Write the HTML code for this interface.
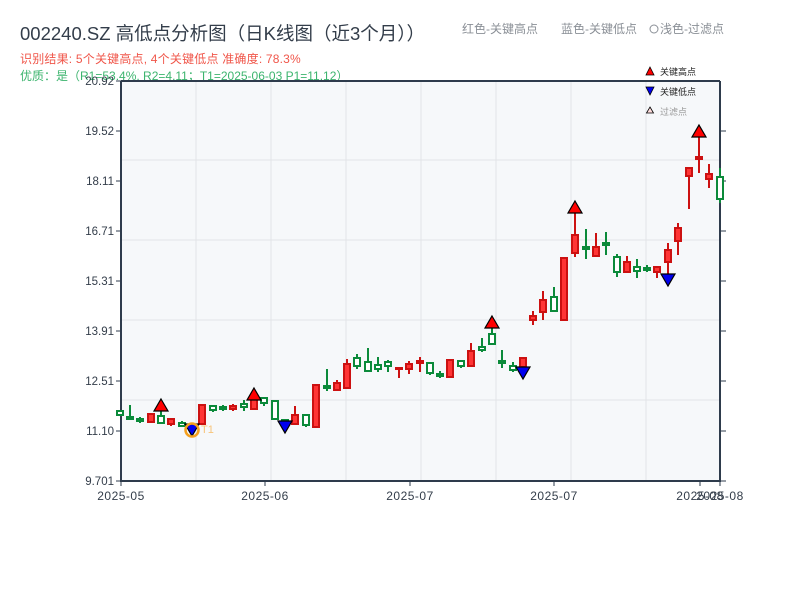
<!DOCTYPE html>
<html><head><meta charset="utf-8"><style>
body{margin:0;background:#fff;width:800px;height:600px;overflow:hidden;font-family:"Liberation Sans","Noto Sans CJK SC",sans-serif}
</style></head><body>
<svg width="800" height="600" xmlns="http://www.w3.org/2000/svg" font-family="Liberation Sans, Noto Sans CJK SC, sans-serif">
<text x="20" y="40" font-size="18.5" fill="#333d4a">002240.SZ 高低点分析图（日K线图（近3个月））</text>
<text x="462" y="33" font-size="12" fill="#8a8f96">红色-关键高点</text>
<text x="561" y="33" font-size="12" fill="#8a8f96">蓝色-关键低点</text>
<circle cx="654" cy="29" r="4" fill="none" stroke="#8a8f96"/>
<text x="660" y="33" font-size="12" fill="#8a8f96">浅色-过滤点</text>
<text x="20" y="63" font-size="12" fill="#f0564a" letter-spacing="0.2">识别结果: 5个关键高点, 4个关键低点  准确度: 78.3%</text>
<text x="20" y="80" font-size="12" fill="#3cb46e">优质：是（R1=53.4%, R2=4.11；T1=2025-06-03 P1=11.12）</text>
<rect x="121" y="81" width="599" height="400" fill="#f6f8fa"/>
<g stroke="#e2e4e8" stroke-width="1">
<line x1="196" y1="81" x2="196" y2="481"/><line x1="271" y1="81" x2="271" y2="481"/><line x1="346" y1="81" x2="346" y2="481"/><line x1="421" y1="81" x2="421" y2="481"/><line x1="496" y1="81" x2="496" y2="481"/><line x1="571" y1="81" x2="571" y2="481"/><line x1="646" y1="81" x2="646" y2="481"/>
<line x1="121" y1="160" x2="720" y2="160"/><line x1="121" y1="240" x2="720" y2="240"/><line x1="121" y1="320" x2="720" y2="320"/><line x1="121" y1="400" x2="720" y2="400"/>
</g>
<g stroke="#2e3b4c" stroke-width="2" fill="none">
<line x1="121" y1="81" x2="121" y2="482"/><line x1="120" y1="481" x2="721" y2="481"/><line x1="720" y1="81" x2="720" y2="482"/><line x1="121" y1="81" x2="720" y2="81"/>
</g>
<g stroke="#2e3b4c" stroke-width="1">
<line x1="116" y1="81" x2="121" y2="81"/><line x1="116" y1="131" x2="121" y2="131"/><line x1="116" y1="181" x2="121" y2="181"/><line x1="116" y1="231" x2="121" y2="231"/><line x1="116" y1="281" x2="121" y2="281"/><line x1="116" y1="331" x2="121" y2="331"/><line x1="116" y1="381" x2="121" y2="381"/><line x1="116" y1="431" x2="121" y2="431"/><line x1="116" y1="481" x2="121" y2="481"/>
<line x1="720" y1="131" x2="726" y2="131"/><line x1="720" y1="181" x2="726" y2="181"/><line x1="720" y1="231" x2="726" y2="231"/><line x1="720" y1="281" x2="726" y2="281"/><line x1="720" y1="331" x2="726" y2="331"/><line x1="720" y1="381" x2="726" y2="381"/><line x1="720" y1="431" x2="726" y2="431"/><line x1="720" y1="481" x2="726" y2="481"/>
<line x1="121" y1="481" x2="121" y2="486"/><line x1="265" y1="481" x2="265" y2="486"/><line x1="410" y1="481" x2="410" y2="486"/><line x1="554" y1="481" x2="554" y2="486"/><line x1="700" y1="481" x2="700" y2="486"/><line x1="720" y1="481" x2="720" y2="486"/>
</g>
<g font-size="11.5" fill="#333d4a" text-anchor="end">
<text x="114" y="85">20.92</text><text x="114" y="135">19.52</text><text x="114" y="185">18.11</text><text x="114" y="235">16.71</text><text x="114" y="285">15.31</text><text x="114" y="335">13.91</text><text x="114" y="385">12.51</text><text x="114" y="435">11.10</text><text x="114" y="485">9.701</text>
</g>
<g font-size="12" fill="#333d4a" text-anchor="middle" letter-spacing="0.5">
<text x="121" y="500">2025-05</text><text x="265" y="500">2025-06</text><text x="410" y="500">2025-07</text><text x="554" y="500">2025-07</text><text x="700" y="500">2025-08</text><text x="720" y="500">2025-08</text>
</g>
<g stroke-width="2">
<g stroke="#0b8a3a" fill="#fff">
<line x1="120" y1="410" x2="120" y2="416"/><rect x="117" y="411" width="6" height="4"/>
<line x1="130" y1="405" x2="130" y2="419"/><rect x="127" y="417" width="6" height="2"/>
<line x1="140" y1="417" x2="140" y2="423"/><rect x="137" y="419" width="6" height="2"/>
<line x1="161" y1="410" x2="161" y2="423"/><rect x="158" y="416" width="6" height="7"/>
<line x1="182" y1="421" x2="182" y2="427"/><rect x="179" y="423" width="6" height="3"/>
<line x1="213" y1="405" x2="213" y2="412"/><rect x="210" y="406" width="6" height="4"/>
<line x1="223" y1="405" x2="223" y2="411"/><rect x="220" y="407" width="6" height="2"/>
<line x1="244" y1="400" x2="244" y2="411"/><rect x="241" y="404" width="6" height="3"/>
<line x1="264" y1="397" x2="264" y2="406"/><rect x="261" y="398" width="6" height="5"/>
<line x1="275" y1="400" x2="275" y2="420"/><rect x="272" y="401" width="6" height="18"/>
<line x1="285" y1="419" x2="285" y2="423"/><rect x="282" y="420" width="6" height="2"/>
<line x1="306" y1="414" x2="306" y2="427"/><rect x="303" y="415" width="6" height="10"/>
<line x1="327" y1="369" x2="327" y2="391"/><rect x="324" y="386" width="6" height="2"/>
<line x1="357" y1="354" x2="357" y2="369"/><rect x="354" y="358" width="6" height="8"/>
<line x1="368" y1="348" x2="368" y2="372"/><rect x="365" y="362" width="6" height="9"/>
<line x1="378" y1="357" x2="378" y2="372"/><rect x="375" y="365" width="6" height="4"/>
<line x1="388" y1="360" x2="388" y2="372"/><rect x="385" y="362" width="6" height="4"/>
<line x1="430" y1="363" x2="430" y2="375"/><rect x="427" y="363" width="6" height="10"/>
<line x1="440" y1="371" x2="440" y2="378"/><rect x="437" y="374" width="6" height="2"/>
<line x1="461" y1="360" x2="461" y2="368"/><rect x="458" y="361" width="6" height="5"/>
<line x1="482" y1="338" x2="482" y2="352"/><rect x="479" y="347" width="6" height="3"/>
<line x1="492" y1="328" x2="492" y2="344"/><rect x="489" y="334" width="6" height="10"/>
<line x1="502" y1="350" x2="502" y2="368"/><rect x="499" y="361" width="6" height="2"/>
<line x1="513" y1="362" x2="513" y2="372"/><rect x="510" y="366" width="6" height="4"/>
<line x1="554" y1="287" x2="554" y2="312"/><rect x="551" y="297" width="6" height="14"/>
<line x1="586" y1="229" x2="586" y2="259"/><rect x="583" y="247" width="6" height="2"/>
<line x1="606" y1="232" x2="606" y2="255"/><rect x="603" y="243" width="6" height="2"/>
<line x1="617" y1="254" x2="617" y2="277"/><rect x="614" y="257" width="6" height="15"/>
<line x1="637" y1="259" x2="637" y2="278"/><rect x="634" y="267" width="6" height="4"/>
<line x1="647" y1="265" x2="647" y2="272"/><rect x="644" y="268" width="6" height="2"/>
<line x1="720" y1="168" x2="720" y2="203"/><rect x="717" y="177" width="6" height="22"/>
</g>
<g stroke="#cc1111" fill="#ff3535">
<line x1="151" y1="413" x2="151" y2="423"/><rect x="148" y="414" width="6" height="8"/>
<line x1="171" y1="419" x2="171" y2="426"/><rect x="168" y="419" width="6" height="5"/>
<line x1="202" y1="404" x2="202" y2="424"/><rect x="199" y="405" width="6" height="19"/>
<line x1="233" y1="404" x2="233" y2="411"/><rect x="230" y="406" width="6" height="3"/>
<line x1="254" y1="398" x2="254" y2="409"/><rect x="251" y="398" width="6" height="11"/>
<line x1="295" y1="406" x2="295" y2="425"/><rect x="292" y="415" width="6" height="9"/>
<line x1="316" y1="385" x2="316" y2="427"/><rect x="313" y="385" width="6" height="42"/>
<line x1="337" y1="380" x2="337" y2="391"/><rect x="334" y="383" width="6" height="7"/>
<line x1="347" y1="359" x2="347" y2="389"/><rect x="344" y="364" width="6" height="24"/>
<line x1="399" y1="368" x2="399" y2="378"/><rect x="396" y="368" width="6" height="1"/>
<line x1="409" y1="361" x2="409" y2="374"/><rect x="406" y="364" width="6" height="5"/>
<line x1="420" y1="357" x2="420" y2="372"/><rect x="417" y="361" width="6" height="2"/>
<line x1="450" y1="360" x2="450" y2="377"/><rect x="447" y="360" width="6" height="17"/>
<line x1="471" y1="343" x2="471" y2="366"/><rect x="468" y="351" width="6" height="15"/>
<line x1="523" y1="357" x2="523" y2="367"/><rect x="520" y="358" width="6" height="9"/>
<line x1="533" y1="311" x2="533" y2="325"/><rect x="530" y="316" width="6" height="4"/>
<line x1="543" y1="291" x2="543" y2="320"/><rect x="540" y="300" width="6" height="12"/>
<line x1="564" y1="258" x2="564" y2="320"/><rect x="561" y="258" width="6" height="62"/>
<line x1="575" y1="213" x2="575" y2="257"/><rect x="572" y="235" width="6" height="18"/>
<line x1="596" y1="233" x2="596" y2="257"/><rect x="593" y="247" width="6" height="9"/>
<line x1="627" y1="256" x2="627" y2="273"/><rect x="624" y="262" width="6" height="10"/>
<line x1="657" y1="267" x2="657" y2="278"/><rect x="654" y="267" width="6" height="5"/>
<line x1="668" y1="243" x2="668" y2="274"/><rect x="665" y="250" width="6" height="12"/>
<line x1="678" y1="223" x2="678" y2="255"/><rect x="675" y="228" width="6" height="13"/>
<line x1="689" y1="168" x2="689" y2="209"/><rect x="686" y="168" width="6" height="8"/>
<line x1="699" y1="137" x2="699" y2="173"/><rect x="696" y="157" width="6" height="2"/>
<line x1="709" y1="164" x2="709" y2="188"/><rect x="706" y="174" width="6" height="5"/>
</g>
</g>
<g stroke="#000" stroke-width="1.2">
<g fill="#ff0000">
<path d="M161 399 L168 411 L154 411Z"/><path d="M254 388 L261 400 L247 400Z"/><path d="M492 316 L499 328 L485 328Z"/><path d="M575 201 L582 213 L568 213Z"/><path d="M699 125 L706 137 L692 137Z"/>
</g>
<g fill="#0000ee">
<path d="M185 424 L199 424 L192 436Z"/><path d="M278 421 L292 421 L285 433Z"/><path d="M516 367 L530 367 L523 379Z"/><path d="M661 274 L675 274 L668 286Z"/>
</g>
</g>
<circle cx="192" cy="430" r="6.5" fill="none" stroke="#f5a01e" stroke-width="2.5"/>
<text x="201" y="433" font-size="11" fill="#f7c47a">T1</text>
<path d="M650 67 L654 75 L646 75Z" fill="#f00" stroke="#000" stroke-width="0.8"/>
<text x="660" y="75" font-size="9" fill="#222">关键高点</text>
<path d="M646 87 L654 87 L650 95Z" fill="#00e" stroke="#000" stroke-width="0.8"/>
<text x="660" y="95" font-size="9" fill="#222">关键低点</text>
<path d="M650 107 L653.5 113 L646.5 113Z" fill="#fdd" stroke="#000" stroke-width="0.8"/>
<text x="660" y="115" font-size="9" fill="#999">过滤点</text>
</svg>
</body></html>
